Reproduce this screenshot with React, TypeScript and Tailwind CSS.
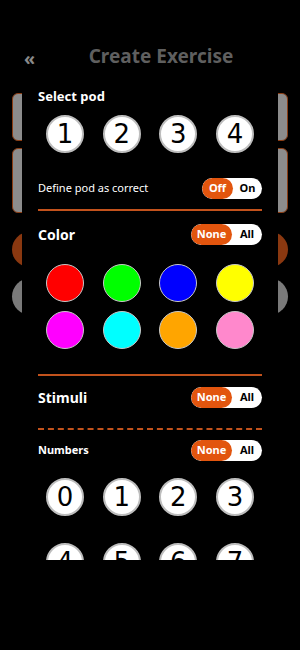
import React from "react";

const PODS = ["1", "2", "3", "4"];
const COLORS = ["#ff0000", "#00ff00", "#0000ff", "#ffff00", "#ff00ff", "#00ffff", "#ffa500", "#ff88cc"];
const NUMBERS = ["0", "1", "2", "3", "4", "5", "6", "7"];

function Toggle({ left, right }: { left: string; right: string }) {
  return (
    <div className="flex h-[21px] w-[71px] overflow-hidden rounded-full bg-white text-[11px] font-bold">
      <div className="flex flex-1 items-center justify-center rounded-full bg-[#e2550e] text-white">{left}</div>
      <div className="flex w-[30px] items-center justify-center text-black">{right}</div>
    </div>
  );
}

function Bubble({ label }: { label: string }) {
  return (
    <div className="flex h-[38px] w-[38px] items-center justify-center rounded-full border-2 border-[#bdbdbd] bg-white text-[26px] leading-none text-black [font-family:'DejaVu_Sans',sans-serif]">
      {label}
    </div>
  );
}

export default function App() {
  return (
    <div className="relative h-[650px] w-[300px] overflow-hidden bg-black [font-family:'Noto_Sans',sans-serif]">
      {/* Header */}
      <header className="relative flex h-[80px] items-center justify-center pt-[32px]">
        <span className="absolute left-[24px] top-[45px] text-[18px] font-bold text-[#8a8a8a]">«</span>
        <h1 className="ml-[22px] text-[19px] font-bold text-[#5f5f5f]">Create Exercise</h1>
      </header>

      {/* Page behind the sheet */}
      <div className="flex flex-col px-3 pt-[13px]">
        <div className="h-[48px] rounded-[6px] border border-[#8b3d14] bg-[#8c8c8c]" />
        <div className="mt-[7px] h-[65px] rounded-[6px] border border-[#8b3d14] bg-[#8c8c8c]" />
        <div className="mt-[19px] h-[35px] rounded-full bg-[#8a3810]" />
        <div className="mt-[11px] h-[37px] rounded-full bg-[#7a7a7a]" />
      </div>

      {/* Sheet */}
      <div className="absolute left-[22px] top-[80px] h-[480px] w-[256px] overflow-hidden bg-black px-4 text-white">
        <h2 className="mt-[7px] text-[13px] font-bold">Select pod</h2>
        <div className="mt-[8px] flex justify-between px-[8px]">
          {PODS.map((p) => (
            <Bubble key={p} label={p} />
          ))}
        </div>
        <div className="mt-[25px] flex items-center justify-between">
          <span className="text-[11px]">Define pod as correct</span>
          <div className="flex h-[21px] w-[60px] overflow-hidden rounded-full bg-white text-[11px] font-bold">
            <div className="flex w-[31px] items-center justify-center rounded-full bg-[#e2550e] text-white">Off</div>
            <div className="flex flex-1 items-center justify-center text-black">On</div>
          </div>
        </div>
        <div className="mt-[10px] h-[2px] bg-[#c2521c]" />

        <div className="mt-[13px] flex items-center justify-between">
          <h2 className="text-[14px] font-bold">Color</h2>
          <Toggle left="None" right="All" />
        </div>
        <div className="mt-[19px] grid grid-cols-[repeat(4,38px)] justify-between gap-y-[9px] px-[8px]">
          {COLORS.map((c) => (
            <div key={c} className="h-[38px] w-[38px] rounded-full border border-[#c8c8c8]" style={{ backgroundColor: c }} />
          ))}
        </div>
        <div className="mt-[25px] h-[2px] bg-[#c2521c]" />

        <div className="mt-[11px] flex items-center justify-between">
          <h2 className="text-[14px] font-bold">Stimuli</h2>
          <Toggle left="None" right="All" />
        </div>
        <div className="mt-[20px] border-t-2 border-dashed border-[#c2521c]" />

        <div className="mt-[10px] flex items-center justify-between">
          <h3 className="text-[11px] font-bold">Numbers</h3>
          <Toggle left="None" right="All" />
        </div>
        <div className="mt-[17px] grid grid-cols-[repeat(4,38px)] justify-between gap-y-[27px] px-[8px]">
          {NUMBERS.map((n) => (
            <Bubble key={n} label={n} />
          ))}
        </div>
      </div>
    </div>
  );
}
